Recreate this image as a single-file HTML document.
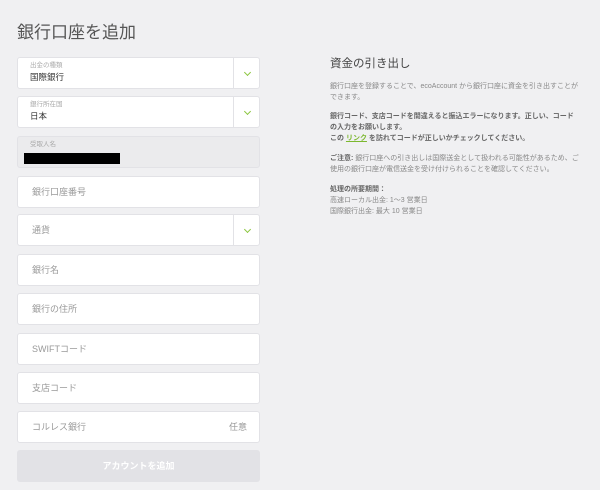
<!DOCTYPE html>
<html><head><meta charset="utf-8"><style>
*{box-sizing:border-box;margin:0;padding:0}
body{width:600px;height:490px;background:#f0f0f2;font-family:"Liberation Sans","Noto Sans CJK JP",sans-serif;position:relative;overflow:hidden;color:#333}
.t{position:absolute;left:17px;top:18px;font-size:17px;color:#555}
.f{position:absolute;left:17px;width:243px;height:32px;background:#fff;border:1px solid #e2e2e6;border-radius:3px;font-size:9px;color:#999;padding-left:14px;line-height:30px}
.f.sel::after{content:"";position:absolute;right:0;top:0;width:25px;height:100%;border-left:1px solid #e2e2e6}
.chev{position:absolute;right:9px;top:12px;width:5px;height:5px;border-right:1.3px solid #8cc63f;border-bottom:1.3px solid #8cc63f;transform:rotate(45deg)}
.lb{position:absolute;left:12px;top:4px;font-size:6.5px;color:#aaa;line-height:8px}
.vl{position:absolute;left:12px;top:14px;font-size:8.5px;color:#333;line-height:11px}
.r{position:absolute;left:330px;font-size:7px;color:#888;line-height:11px;width:250px}
b{color:#666}
</style></head><body>
<div class="t">銀行口座を追加</div>
<div class="f sel" style="top:57px"><span class="lb">出金の種類</span><span class="vl">国際銀行</span><span class="chev"></span></div>
<div class="f sel" style="top:96px"><span class="lb">銀行所在国</span><span class="vl">日本</span><span class="chev"></span></div>
<div class="f" style="top:136px;background:#ebebed"><span class="lb" style="left:12px">受取人名</span><span style="position:absolute;left:6px;top:16px;width:96px;height:11px;background:#000"></span></div>
<div class="f" style="top:176px">銀行口座番号</div>
<div class="f sel" style="top:214px">通貨<span class="chev"></span></div>
<div class="f" style="top:254px">銀行名</div>
<div class="f" style="top:293px">銀行の住所</div>
<div class="f" style="top:333px">SWIFTコード</div>
<div class="f" style="top:372px">支店コード</div>
<div class="f" style="top:411px">コルレス銀行<span style="position:absolute;right:12px">任意</span></div>
<div style="position:absolute;left:17px;top:450px;width:243px;height:32px;background:#e2e2e6;border-radius:3px;color:#fff;font-size:9px;text-align:center;line-height:32px;font-weight:bold">アカウントを追加</div>
<div style="position:absolute;left:330px;top:55px;font-size:11.5px;color:#444">資金の引き出し</div>
<div class="r" style="top:81px">銀行口座を登録することで、ecoAccount から銀行口座に資金を引き出すことができます。</div>
<div class="r" style="top:111px"><b>銀行コード、支店コードを間違えると振込エラーになります。正しい、コード<br>の入力をお願いします。<br>この <span style="color:#7cb82f;text-decoration:underline">リンク</span> を訪れてコードが正しいかチェックしてください。</b></div>
<div class="r" style="top:153px"><b>ご注意:</b> 銀行口座への引き出しは国際送金として扱われる可能性があるため、ご使用の銀行口座が電信送金を受け付けられることを確認してください。</div>
<div class="r" style="top:184px"><b>処理の所要期間：</b><br>高速ローカル出金: 1〜3 営業日<br>国際銀行出金: 最大 10 営業日</div>
</body></html>
